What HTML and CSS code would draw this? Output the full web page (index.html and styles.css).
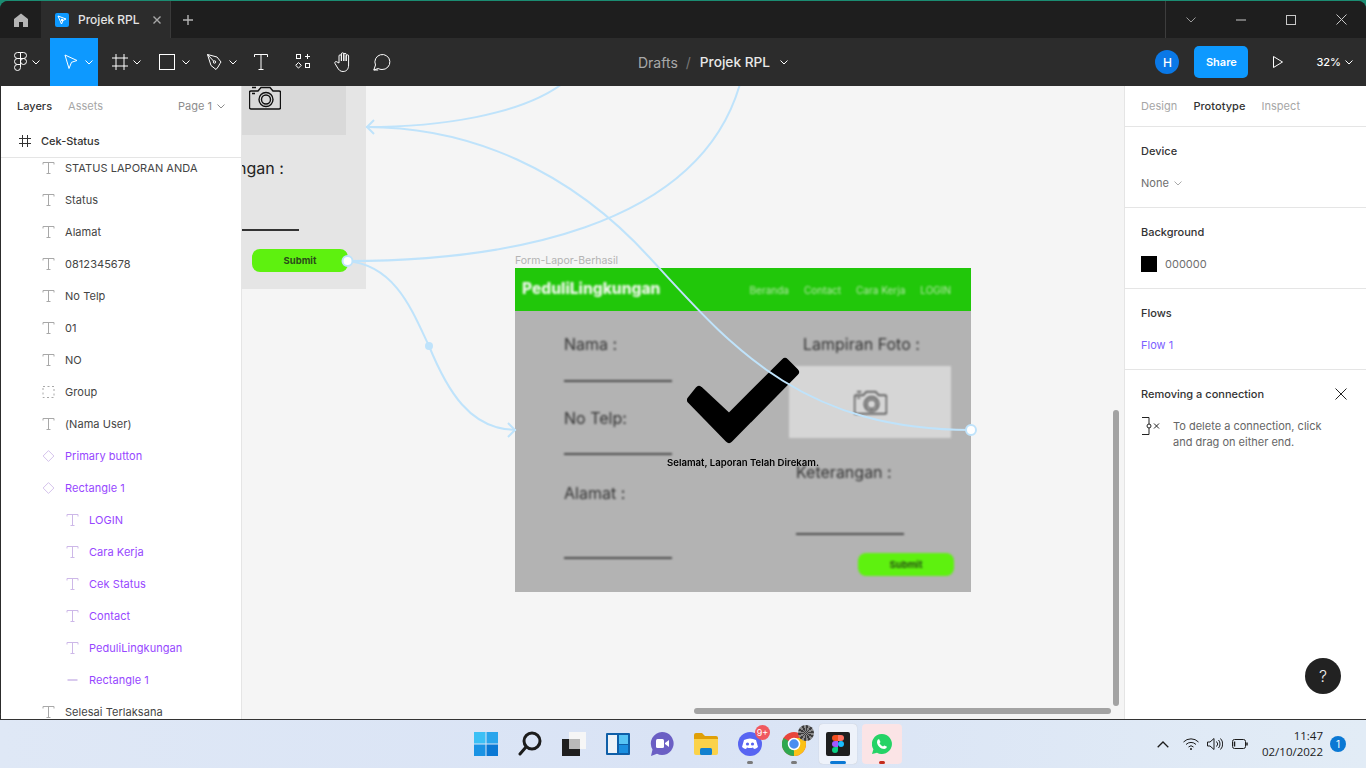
FILE: index.html
```html
<!DOCTYPE html>
<html lang="id">
<head>
    <meta charset="UTF-8">
    <meta name="viewport" content="width=device-width, initial-scale=1.0">
    <title>Projek RPL</title>
    <link rel="stylesheet" href="styles.css">
</head>
<body>
    <svg class="sprite" width="0" height="0">
        <symbol id="i-text" viewBox="0 0 12 12"><path d="M.5 2.5V.5h11v2M6 .5v11M4 11.5h4" fill="none" stroke="currentColor"/></symbol>
        <symbol id="i-diamond" viewBox="0 0 14 14"><path d="M7 .7L13.3 7 7 13.3.7 7z" fill="none" stroke="currentColor"/></symbol>
        <symbol id="i-chev" viewBox="0 0 8 5"><path d="M.5.5L4 4 7.5.5" fill="none" stroke="currentColor"/></symbol>
        <symbol id="i-camera" viewBox="0 0 32 24"><path d="M2 5h7l3-3.5h9L24 5h6q1.5 0 1.5 1.5v15q0 1.5-1.5 1.5H2q-1.5 0-1.5-1.5v-15Q.5 5 2 5z" fill="none" stroke="currentColor" stroke-width="1.4"/><circle cx="17" cy="13.5" r="7" fill="none" stroke="currentColor" stroke-width="1.4"/><circle cx="17" cy="13.5" r="4.5" fill="none" stroke="currentColor" stroke-width="1.4"/><path d="M3 1.5h4M3 7.5h3" stroke="currentColor" stroke-width="1.4"/></symbol>
    </svg>

    <div class="window">
        <!-- barra de abas -->
        <div class="titlebar">
            <div class="home-tab">
                <svg width="14" height="14" viewBox="0 0 14 14"><path d="M7 .5L14 6v8H9V9H5v5H0V6z" fill="#b4b4b4"/></svg>
            </div>
            <div class="file-tab">
                <span class="file-icon">
                    <svg width="10" height="10" viewBox="0 0 10 10"><path d="M1 1l8 3-3 1.5L4.5 9z" fill="none" stroke="#fff"/><circle cx="5" cy="5" r="1.2" fill="#fff"/></svg>
                </span>
                <span class="file-name">Projek RPL</span>
                <svg class="tab-close" width="8" height="8" viewBox="0 0 8 8"><path d="M.5.5l7 7M7.5.5l-7 7" stroke="#a8a8a8" stroke-width="1.4"/></svg>
            </div>
            <svg class="tab-add" width="10" height="10" viewBox="0 0 10 10"><path d="M5 0v10M0 5h10" stroke="#b4b4b4" stroke-width="1.4"/></svg>
            <div class="win-controls">
                <span class="win-btn"><svg width="10" height="6" viewBox="0 0 10 6"><path d="M.5.5L5 5 9.5.5" fill="none" stroke="#9a9a9a"/></svg></span>
                <span class="win-btn"><svg width="10" height="2" viewBox="0 0 10 2"><path d="M0 1h10" stroke="#c8c8c8"/></svg></span>
                <span class="win-btn"><svg width="10" height="10" viewBox="0 0 10 10"><rect x=".5" y=".5" width="9" height="9" fill="none" stroke="#c8c8c8"/></svg></span>
                <span class="win-btn"><svg width="11" height="11" viewBox="0 0 11 11"><path d="M.5.5l10 10M10.5.5l-10 10" stroke="#c8c8c8"/></svg></span>
            </div>
        </div>

        <!-- barra de ferramentas -->
        <div class="toolbar">
            <div class="tools">
                <div class="tool tool-menu">
                    <svg width="13" height="20" viewBox="0 0 13 20" fill="none" stroke="#fff"><path d="M6.5.5h-3a3 3 0 000 6h3zM6.5.5h3a3 3 0 010 6h-3zM6.5 6.5h-3a3 3 0 000 6h3z"/><circle cx="9.5" cy="9.5" r="3"/><path d="M6.5 12.5h-3a3 3 0 103 3z"/></svg>
                    <svg class="chev"><use href="#i-chev"/></svg>
                </div>
                <div class="tool tool-active">
                    <svg width="14" height="16" viewBox="0 0 14 16"><path d="M1 1l12 5.5-5.5 1.8L5 14.5z" fill="none" stroke="#fff"/></svg>
                    <svg class="chev"><use href="#i-chev"/></svg>
                </div>
                <div class="tool tool-frame">
                    <svg width="16" height="16" viewBox="0 0 16 16"><path d="M4 0v16M12 0v16M0 4h16M0 12h16" stroke="#fff"/></svg>
                    <svg class="chev"><use href="#i-chev"/></svg>
                </div>
                <div class="tool tool-rect">
                    <svg width="16" height="16" viewBox="0 0 16 16"><rect x=".5" y=".5" width="15" height="15" fill="none" stroke="#fff"/></svg>
                    <svg class="chev"><use href="#i-chev"/></svg>
                </div>
                <div class="tool tool-pen">
                    <svg width="16" height="16" viewBox="0 0 16 16" fill="none" stroke="#fff"><path d="M.5.5L10 3l4 5-1 1.5-2 3.5-2 2.5-5-4z"/><path d="M.5.5l6 6.5"/><circle cx="7.5" cy="8" r="1.2"/></svg>
                    <svg class="chev"><use href="#i-chev"/></svg>
                </div>
                <div class="tool tool-plain tool-type">
                    <svg width="14" height="16" viewBox="0 0 14 16"><path d="M.5 3V.5h13V3M7 .5v15M4.5 15.5h5" fill="none" stroke="#fff"/></svg>
                </div>
                <div class="tool tool-plain tool-nudge">
                    <svg width="16" height="16" viewBox="0 0 16 16" fill="none" stroke="#fff"><rect x="1.5" y=".5" width="4" height="4"/><path d="M12.5 0v5M10 2.5h5"/><path d="M3.5 8.5l2.8 2.8-2.800 2.800-2.800-2.800z"/><rect x="10.5" y="9.5" width="4" height="4"/></svg>
                </div>
                <div class="tool tool-plain tool-nudge">
                    <svg width="18" height="20" viewBox="0 0 18 20" fill="none" stroke="#fff"><path d="M5 11V4a1.2 1.2 0 012.4 0v5-7a1.2 1.2 0 012.4 0v7-6.5a1.2 1.2 0 012.4 0V9 4a1.2 1.2 0 012.4 0v9c0 4-2 6.5-5.5 6.5-3 0-4.3-1.5-6-4.5L1 11.5c-.8-1.5 1-2.6 2.1-1.5z"/></svg>
                </div>
                <div class="tool tool-plain">
                    <svg width="18" height="18" viewBox="0 0 18 18" fill="none" stroke="#fff"><path d="M.8 17l1.7-5A7.5 7.5 0 119 16.5c-1.4 0-2.7-.3-3.8-1z"/><path d="M.8 17h4.4"/></svg>
                </div>
            </div>
            <div class="doc-title">
                <span class="crumb">Drafts</span>
                <span class="crumb-sep">/</span>
                <span class="doc-name">Projek RPL</span>
                <svg class="chev"><use href="#i-chev"/></svg>
            </div>
            <div class="actions">
                <span class="avatar">H</span>
                <span class="share">Share</span>
                <svg class="play" width="10" height="12" viewBox="0 0 10 12"><path d="M.5.5l9 5.5-9 5.5z" fill="none" stroke="#fff"/></svg>
                <span class="zoom-level">32%</span>
                <svg class="chev"><use href="#i-chev"/></svg>
            </div>
        </div>

        <div class="workspace">
            <!-- painel de camadas -->
            <aside class="left-panel">
                <div class="panel-top">
                    <div class="panel-tabs">
                        <span class="tab-on">Layers</span>
                        <span class="tab-off">Assets</span>
                        <span class="page-select">Page 1 <svg class="chev"><use href="#i-chev"/></svg></span>
                    </div>
                    <div class="frame-row">
                        <svg width="12" height="12" viewBox="0 0 12 12"><path d="M3.5 0v12M8.5 0v12M0 3.5h12M0 8.5h12" stroke="#333"/></svg>
                        <span>Cek-Status</span>
                    </div>
                </div>
                <ul class="layers">
                    <li class="layer"><svg class="ico"><use href="#i-text"/></svg>STATUS LAPORAN ANDA</li>
                    <li class="layer"><svg class="ico"><use href="#i-text"/></svg>Status</li>
                    <li class="layer"><svg class="ico"><use href="#i-text"/></svg>Alamat</li>
                    <li class="layer"><svg class="ico"><use href="#i-text"/></svg>0812345678</li>
                    <li class="layer"><svg class="ico"><use href="#i-text"/></svg>No Telp</li>
                    <li class="layer"><svg class="ico"><use href="#i-text"/></svg>01</li>
                    <li class="layer"><svg class="ico"><use href="#i-text"/></svg>NO</li>
                    <li class="layer"><svg class="ico" viewBox="0 0 12 12"><rect x=".5" y=".5" width="11" height="11" fill="none" stroke="currentColor" stroke-dasharray="2 2.5"/></svg>Group</li>
                    <li class="layer"><svg class="ico"><use href="#i-text"/></svg>(Nama User)</li>
                    <li class="layer comp"><svg class="ico"><use href="#i-diamond"/></svg>Primary button</li>
                    <li class="layer comp"><svg class="ico"><use href="#i-diamond"/></svg>Rectangle 1</li>
                    <li class="layer comp sub"><svg class="ico"><use href="#i-text"/></svg>LOGIN</li>
                    <li class="layer comp sub"><svg class="ico"><use href="#i-text"/></svg>Cara Kerja</li>
                    <li class="layer comp sub"><svg class="ico"><use href="#i-text"/></svg>Cek Status</li>
                    <li class="layer comp sub"><svg class="ico"><use href="#i-text"/></svg>Contact</li>
                    <li class="layer comp sub"><svg class="ico"><use href="#i-text"/></svg>PeduliLingkungan</li>
                    <li class="layer comp sub"><svg class="ico" viewBox="0 0 12 12"><path d="M1 6h10" stroke="currentColor" stroke-width="1.5"/></svg>Rectangle 1</li>
                    <li class="layer"><svg class="ico"><use href="#i-text"/></svg>Selesai Terlaksana</li>
                </ul>
            </aside>

            <!-- canvas -->
            <main class="canvas">
                <div class="frame-cut">
                    <div class="cut-photo">
                        <svg class="cut-camera"><use href="#i-camera"/></svg>
                    </div>
                    <span class="cut-label">ngan :</span>
                    <span class="cut-line"></span>
                    <span class="cut-submit">Submit</span>
                </div>

                <span class="frame-label">Form-Lapor-Berhasil</span>
                <div class="mock">
                    <div class="mock-blur">
                        <div class="mock-head">
                            <span class="mock-logo">PeduliLingkungan</span>
                            <nav class="mock-nav">
                                <span>Beranda</span>
                                <span>Contact</span>
                                <span>Cara Kerja</span>
                                <span>LOGIN</span>
                            </nav>
                        </div>
                        <span class="mock-text f-nama">Nama :</span>
                        <span class="mock-rule r-nama"></span>
                        <span class="mock-text f-telp">No Telp:</span>
                        <span class="mock-rule r-telp"></span>
                        <span class="mock-text f-alamat">Alamat :</span>
                        <span class="mock-rule r-alamat"></span>
                        <span class="mock-text f-foto">Lampiran Foto :</span>
                        <div class="mock-photo"><svg class="mock-camera"><use href="#i-camera"/></svg></div>
                        <span class="mock-text f-ket">Keterangan :</span>
                        <span class="mock-rule r-ket"></span>
                        <span class="mock-submit">Submit</span>
                    </div>
                    <svg class="check" width="114" height="90" viewBox="0 0 114 90"><path d="M12 33L42 61 98 5 108 15 42 82 4 43z" fill="#000" stroke="#000" stroke-width="8" stroke-linejoin="round"/></svg>
                    <span class="done-text">Selamat, Laporan Telah Direkam.</span>
                </div>

                <!-- ligações do protótipo -->
                <svg class="wires" width="882" height="633" viewBox="242 86 882 633" fill="none" stroke="#bfe3fb" stroke-width="2">
                    <path d="M347 261C395 265 412 310 429 346C447 390 470 430 516 430"/>
                    <path d="M347 261C500 261 698 230 740 84"/>
                    <path d="M971 430C800 430 730 345 650 258C570 170 470 127 366 127"/>
                    <path d="M366 127C440 127 520 115 562 84"/>
                    <path d="M374 120l-7 7 7 7M508 423l7 7-7 7"/>
                    <circle cx="429" cy="346" r="4" fill="#bfe3fb" stroke="none"/>
                    <circle cx="347.5" cy="261" r="5" fill="#fff"/>
                    <circle cx="971" cy="430" r="5" fill="#fff"/>
                </svg>

                <span class="scroll-v"></span>
                <span class="scroll-h"></span>
            </main>

            <!-- painel direito -->
            <aside class="right-panel">
                <div class="right-tabs">
                    <span class="tab-off">Design</span>
                    <span class="tab-on">Prototype</span>
                    <span class="tab-off">Inspect</span>
                </div>
                <section class="prop prop-device">
                    <h3>Device</h3>
                    <span class="prop-value">None <svg class="chev"><use href="#i-chev"/></svg></span>
                </section>
                <section class="prop">
                    <h3>Background</h3>
                    <span class="prop-value"><span class="swatch"></span>000000</span>
                </section>
                <section class="prop">
                    <h3>Flows</h3>
                    <span class="prop-value flow">Flow 1</span>
                </section>
                <section class="hint">
                    <div class="hint-head">
                        <h3>Removing a connection</h3>
                        <svg width="12" height="12" viewBox="0 0 12 12"><path d="M.5.5l11 11M11.5.5l-11 11" stroke="#222"/></svg>
                    </div>
                    <div class="hint-body">
                        <svg width="20" height="18" viewBox="0 0 20 18" fill="none" stroke="#222"><path d="M1 .5h7v17H1"/><circle cx="8" cy="9" r="2" fill="#fff"/><path d="M13 6.5l5 5M18 6.5l-5 5"/></svg>
                        <p>To delete a connection, click and drag on either end.</p>
                    </div>
                </section>
                <span class="help">?</span>
            </aside>
        </div>
    </div>

    <!-- barra de tarefas -->
    <footer class="taskbar">
        <div class="task-icons">
            <span class="task">
                <svg width="24" height="24" viewBox="0 0 24 24"><rect width="11.5" height="11.5" fill="#3cc0f5"/><rect x="12.5" width="11.5" height="11.5" fill="#2aa5ec"/><rect y="12.5" width="11.5" height="11.5" fill="#1a93e4"/><rect x="12.5" y="12.5" width="11.5" height="11.5" fill="#0a78d4"/></svg>
            </span>
            <span class="task">
                <svg width="24" height="26" viewBox="0 0 24 26" fill="none" stroke="#1c1c1c" stroke-width="3"><circle cx="14" cy="10" r="8"/><path d="M8 16l-6 7" stroke-linecap="round"/></svg>
            </span>
            <span class="task">
                <svg width="24" height="24" viewBox="0 0 24 24"><rect x="7" y="0" width="17" height="17" fill="#f6f6f6"/><rect y="7" width="18" height="17" fill="#1f1f1f"/><rect x="7" y="7" width="11" height="10" fill="#b8b8b8"/></svg>
            </span>
            <span class="task">
                <svg width="24" height="22" viewBox="0 0 24 22"><rect width="24" height="22" rx="1" fill="#0f5fa8"/><rect x="2" y="2" width="9" height="18" fill="#eef3f8"/><rect x="13" y="2" width="9" height="9" fill="#56c4f5"/><rect x="13" y="12" width="9" height="8" fill="#1a8fe0"/></svg>
            </span>
            <span class="task">
                <svg width="24" height="26" viewBox="0 0 24 26"><path d="M12 1a11.5 11.5 0 11-5 21.8L1 25l1.5-6.5A11.5 11.5 0 0112 1z" fill="#6b5fc4"/><rect x="6" y="8" width="8" height="9" rx="1.5" fill="#fff"/><path d="M15 12l4-3v7l-4-3z" fill="#fff"/></svg>
            </span>
            <span class="task">
                <svg width="24" height="22" viewBox="0 0 24 22"><path d="M0 2q0-2 2-2h6l3 3h11q2 0 2 2v3H0z" fill="#e0a008"/><path d="M0 6h24v14q0 2-2 2H2q-2 0-2-2z" fill="#fbd249"/><rect x="6" y="15" width="12" height="7" rx="1.5" fill="#1180cf"/></svg>
            </span>
            <span class="task task-dot">
                <svg width="24" height="24" viewBox="0 0 24 24"><circle cx="12" cy="12" r="12" fill="#5865f2"/><path d="M6 8q3-1.5 6-1.5T18 8l2 7q-2 2-4 2l-1-1.5q-3 1-6 0L8 17q-2 0-4-2z" fill="#fff"/><circle cx="9.5" cy="12" r="1.6" fill="#5865f2"/><circle cx="14.5" cy="12" r="1.6" fill="#5865f2"/></svg>
                <span class="badge-red">9+</span>
            </span>
            <span class="task task-dot">
                <svg width="24" height="24" viewBox="0 0 24 24"><circle cx="12" cy="12" r="12" fill="#e8453c"/><path d="M12 12L1.6 6A12 12 0 001 17a12 12 0 0011 7z" fill="#2fa84f"/><path d="M12 12v12a12 12 0 0012-12q0-3-1.6-6H12z" fill="#fbc116"/><circle cx="12" cy="12" r="5.5" fill="#4a8df0" stroke="#fff" stroke-width="1.5"/></svg>
                <span class="chrome-avatar"></span>
            </span>
            <span class="task task-figma">
                <span class="figma-tile">
                    <svg width="12" height="18" viewBox="0 0 12 18"><path d="M6 0H3a3 3 0 000 6h3z" fill="#f24e1e"/><path d="M6 0h3a3 3 0 010 6H6z" fill="#ff7262"/><path d="M6 6H3a3 3 0 000 6h3z" fill="#a259ff"/><circle cx="9" cy="9" r="3" fill="#1abcfe"/><path d="M6 12H3a3 3 0 103 3z" fill="#0acf83"/></svg>
                </span>
            </span>
            <span class="task task-wa">
                <svg width="20" height="20" viewBox="0 0 20 20"><path d="M10 0a10 10 0 11-5 18.7L0 20l1.4-4.800A10 10 0 0110 0z" fill="#25d366"/><path d="M7 5l1.5 3-1 1.3q1.3 2.3 3.5 3.2l1.3-1.100 2.700 1.400q-.3 2-2.700 2.200C8.500 15 5 11.500 5 8q0-2.400 2-3z" fill="#fff"/></svg>
            </span>
        </div>
        <div class="tray">
            <svg width="12" height="7" viewBox="0 0 12 7"><path d="M.7 6.3L6 1l5.3 5.3" fill="none" stroke="#1c1c1c" stroke-width="1.3"/></svg>
            <svg class="tray-wifi" width="16" height="12" viewBox="0 0 16 12" fill="none" stroke="#1c1c1c"><path d="M.5 4a10.500 10.500 0 0115 0M3 6.500a7 7 0 0110 0M5.500 9a3.500 3.500 0 015 0"/><circle cx="8" cy="11" r=".6" fill="#1c1c1c"/></svg>
            <svg class="tray-vol" width="16" height="12" viewBox="0 0 16 12" fill="none" stroke="#1c1c1c"><path d="M.5 4H3l4-3.500v11L3 8H.5zM9.500 3.500a3.500 3.500 0 010 5M11.500 2a6 6 0 010 8M13.500.5a8 8 0 010 11"/></svg>
            <svg class="tray-batt" width="16" height="10" viewBox="0 0 16 10" fill="none" stroke="#1c1c1c"><rect x=".5" y=".5" width="13" height="9" rx="2"/><path d="M2.5 2.500v5" stroke-width="1.5"/><path d="M15 3.500v3" stroke-width="1.5"/></svg>
            <div class="clock"><span>11:47</span><span>02/10/2022</span></div>
            <span class="notif">1</span>
        </div>
    </footer>
</body>
</html>
```

FILE: styles.css
```css
* {
    box-sizing: border-box;
}
html, body {
    height: 768px;
    overflow: hidden;
}
body {
    margin: 0;
    font-family: Inter, "Liberation Sans", sans-serif;
    font-size: 11px;
    color: #333;
    background-color: #1b8c72;
    display: flex;
    flex-direction: column;
    padding-top: 1px;
}
svg {
    display: block;
    flex-shrink: 0;
}
.sprite {
    position: absolute;
}
h3 {
    margin: 0;
    font-size: 11px;
    font-weight: 500;
    color: #333;
}
.chev {
    width: 8px;
    height: 5px;
    color: currentColor;
}

/* janela */
.window {
    height: 718px;
    display: flex;
    flex-direction: column;
    background-color: #2c2c2c;
    border-radius: 8px 8px 0 0;
    overflow: hidden;
}
.titlebar {
    height: 37px;
    background-color: #1e1e1e;
    display: flex;
    align-items: center;
}
.home-tab {
    width: 41px;
    height: 100%;
    display: flex;
    align-items: center;
    justify-content: center;
}
.file-tab {
    width: 130px;
    height: 100%;
    background-color: #2c2c2c;
    display: flex;
    align-items: center;
    padding-left: 14px;
    border-right: 1px solid #3a3a3a;
}
.file-icon {
    width: 14px;
    height: 14px;
    border-radius: 2px;
    background-color: #0d99ff;
    display: flex;
    align-items: center;
    justify-content: center;
}
.file-name {
    margin-left: 9px;
    font-size: 12px;
    font-weight: 500;
    color: #e4e4e4;
}
.tab-close {
    margin-left: 13px;
}
.tab-add {
    margin-left: 12px;
}
.win-controls {
    margin-left: auto;
    width: 201px;
    height: 100%;
    border-left: 1px solid #3d3d3d;
    display: flex;
}
.win-btn {
    width: 50px;
    display: flex;
    align-items: center;
    justify-content: center;
}

.toolbar {
    height: 48px;
    background-color: #2c2c2c;
    display: flex;
    align-items: center;
    color: #fff;
    position: relative;
}
.tools {
    display: flex;
    height: 100%;
}
.tool {
    width: 48px;
    display: flex;
    align-items: center;
    justify-content: center;
    gap: 6px;
}
.tool-menu {
    width: 50px;
    padding-left: 4px;
    gap: 5px;
}
.tool-active {
    background-color: #0d99ff;
    padding-left: 8px;
    gap: 7px;
}
.tool-frame {
    padding-left: 9px;
    gap: 5px;
}
.tool-rect {
    padding-left: 9px;
    gap: 7px;
}
.tool-pen {
    padding-left: 8px;
    gap: 6px;
}
.tool-plain {
    width: 40px;
}
.tool-type {
    padding-right: 2px;
}
.tool-nudge {
    padding-left: 2px;
}
.doc-title {
    position: absolute;
    left: 638px;
    top: 0;
    height: 100%;
    display: flex;
    align-items: center;
    font-size: 14px;
}
.crumb {
    color: #a8a8a8;
}
.crumb-sep {
    color: #777;
    margin: 0 9px 0 8px;
}
.doc-name {
    font-size: 13.7px;
    font-weight: 500;
    color: #e8e8e8;
    margin-right: 10px;
}
.actions {
    margin-left: auto;
    display: flex;
    align-items: center;
    padding-right: 13px;
}
.avatar {
    width: 24px;
    height: 24px;
    border-radius: 50%;
    background-color: #0a78e6;
    display: flex;
    align-items: center;
    justify-content: center;
    font-size: 12px;
    font-weight: 500;
}
.share {
    width: 54px;
    height: 32px;
    margin-left: 15px;
    border-radius: 5px;
    background-color: #0d99ff;
    display: flex;
    align-items: center;
    justify-content: center;
    font-weight: 600;
}
.play {
    margin-left: 25px;
}
.zoom-level {
    margin-left: 33px;
    font-weight: 500;
    margin-right: 4px;
}

/* área de trabalho */
.workspace {
    flex: 1;
    min-height: 0;
    display: flex;
    background-color: #fff;
    border-left: 1px solid #2c2c2c;
    border-radius: 0 0 0 6px;
}
.left-panel {
    width: 241px;
    background-color: #fff;
    border-right: 1px solid #e5e5e5;
    overflow: hidden;
}
.panel-top {
    position: relative;
    background-color: #fff;
    border-bottom: 1px solid #e5e5e5;
    height: 72px;
}
.panel-tabs {
    height: 40px;
    padding: 0 16px;
    display: flex;
    align-items: center;
    gap: 16px;
}
.tab-on {
    font-weight: 500;
    color: #333;
}
.tab-off {
    color: #a6a6a6;
}
.page-select {
    margin-left: auto;
    padding-left: 1px;
    color: #8c8c8c;
    display: flex;
    align-items: center;
    gap: 5px;
}
.frame-row {
    height: 30px;
    padding-left: 18px;
    display: flex;
    align-items: center;
    gap: 10px;
    font-weight: 500;
}
.layers {
    list-style: none;
    margin: -6px 0 0;
    padding: 0;
}
.layer {
    height: 32px;
    padding-left: 41px;
    display: flex;
    align-items: center;
    gap: 10px;
    color: #444;
    letter-spacing: .05px;
}
.layer .ico {
    width: 13px;
    height: 12px;
    color: #a8a8a8;
}
.comp {
    color: #9747ff;
}
.comp .ico {
    color: #cdb8e8;
}
.sub {
    padding-left: 65px;
}

/* canvas */
.canvas {
    flex: 1;
    position: relative;
    background-color: #f5f5f5;
    overflow: hidden;
}
.frame-cut {
    position: absolute;
    left: 0;
    top: 0;
    width: 124px;
    height: 203px;
    background-color: #e5e5e5;
    overflow: hidden;
}
.cut-photo {
    width: 104px;
    height: 49px;
    background-color: #d9d9d9;
    overflow: hidden;
}
.cut-camera {
    width: 32px;
    height: 24px;
    margin: 0 0 0 7px;
    color: #111;
}
.cut-label {
    position: absolute;
    left: -5px;
    top: 72px;
    font-size: 16px;
    color: #222;
}
.cut-line {
    position: absolute;
    left: 0;
    top: 143px;
    width: 57px;
    height: 2px;
    background-color: #333;
}
.cut-submit {
    position: absolute;
    left: 10px;
    top: 163px;
    width: 96px;
    height: 23px;
    border-radius: 8px;
    background-color: #5ef10f;
    display: flex;
    align-items: center;
    justify-content: center;
    font-size: 9.5px;
    font-weight: 700;
    color: #2a4d1a;
}
.frame-label {
    position: absolute;
    left: 273px;
    top: 168px;
    font-size: 10.5px;
    color: #b3b3b3;
}
.mock {
    position: absolute;
    left: 273px;
    top: 182px;
    width: 456px;
    height: 324px;
    overflow: hidden;
    background: linear-gradient(#21c70a 0 43px, #b3b3b3 43px);
}
.mock-blur {
    position: relative;
    height: 100%;
    filter: blur(.8px);
}
.mock-head {
    height: 43px;
    display: flex;
    align-items: center;
    justify-content: space-between;
    padding: 0 20px 0 7px;
}
.mock-logo {
    font-size: 15.5px;
    font-weight: 800;
    color: #f0f7ec;
    margin-top: -3px;
}
.mock-nav {
    display: flex;
    gap: 15px;
    font-size: 10px;
    color: #b7e6ab;
}
.mock-text {
    position: absolute;
    font-size: 16px;
    color: #333;
    line-height: 20px;
}
.mock-rule {
    position: absolute;
    left: 49px;
    width: 108px;
    height: 2px;
    background-color: #4d4d4d;
}
.f-nama { left: 49px; top: 66px; }
.r-nama { top: 112px; }
.f-telp { left: 49px; top: 140px; }
.r-telp { top: 185px; }
.f-alamat { left: 49px; top: 215px; }
.r-alamat { top: 289px; }
.f-foto { left: 288px; top: 66px; }
.f-ket { left: 281px; top: 194px; }
.r-ket { left: 281px; top: 265px; }
.mock-photo {
    position: absolute;
    left: 274px;
    top: 98px;
    width: 162px;
    height: 72px;
    background-color: #d6d6d6;
    display: flex;
    align-items: center;
    justify-content: center;
}
.mock-camera {
    width: 33px;
    height: 25px;
    color: #444;
}
.mock-submit {
    position: absolute;
    left: 343px;
    top: 285px;
    width: 96px;
    height: 23px;
    border-radius: 8px;
    background-color: #5ef10f;
    display: flex;
    align-items: center;
    justify-content: center;
    font-size: 9.5px;
    font-weight: 700;
    color: #2a5a14;
}
.check {
    position: absolute;
    left: 172px;
    top: 89px;
}
.done-text {
    position: absolute;
    left: 152px;
    top: 189px;
    font-size: 9.6px;
    font-weight: 600;
    color: #000;
    white-space: nowrap;
}
.wires {
    position: absolute;
    left: 0;
    top: 0;
}
.scroll-v {
    position: absolute;
    left: 871px;
    top: 324px;
    width: 6px;
    height: 296px;
    border-radius: 3px;
    background-color: #a3a3a3;
}
.scroll-h {
    position: absolute;
    left: 452px;
    top: 622px;
    width: 417px;
    height: 6px;
    border-radius: 3px;
    background-color: #a3a3a3;
}

/* painel direito */
.right-panel {
    width: 242px;
    position: relative;
    background-color: #fff;
    border-left: 1px solid #e5e5e5;
}
.right-tabs {
    height: 41px;
    padding: 0 16px 1px;
    display: flex;
    align-items: center;
    gap: 16px;
    letter-spacing: .05px;
    border-bottom: 1px solid #e5e5e5;
}
.prop {
    height: 81px;
    padding: 17px 16px 0;
    border-bottom: 1px solid #e5e5e5;
}
.prop-value {
    margin-top: 18px;
    display: flex;
    align-items: center;
    height: 14px;
    gap: 5px;
    color: #6e6e6e;
}
.prop-device .chev {
    color: #aaa;
}
.swatch {
    width: 16px;
    height: 16px;
    background-color: #000;
    margin-right: 3px;
}
.flow {
    color: #7b61ff;
}
.hint {
    padding: 17px 16px;
}
.hint-head {
    display: flex;
    justify-content: space-between;
    align-items: center;
    padding-right: 3px;
}
.hint-body {
    margin-top: 17px;
    display: flex;
    gap: 12px;
}
.hint-body svg {
    margin-top: -1px;
}
.hint-body p {
    margin: 0;
    line-height: 16px;
    color: #666;
    width: 160px;
}
.help {
    position: absolute;
    left: 180px;
    top: 572px;
    width: 36px;
    height: 36px;
    border-radius: 50%;
    background-color: #222;
    color: #eee;
    font-size: 16px;
    font-weight: 300;
    display: flex;
    align-items: center;
    justify-content: center;
}

/* barra de tarefas */
.taskbar {
    height: 49px;
    border-top: 1px solid #333;
    background: linear-gradient(90deg, #dfe8f6, #d9e3f5 50%, #e2ecf6);
    position: relative;
    display: flex;
    justify-content: center;
    align-items: center;
}
.task-icons {
    display: flex;
    padding-left: 2px;
}
.task {
    position: relative;
    width: 44px;
    height: 40px;
    display: flex;
    align-items: center;
    justify-content: center;
    border-radius: 4px;
}
.task-dot::after {
    content: "";
    position: absolute;
    left: 19px;
    bottom: 0;
    width: 6px;
    height: 3px;
    border-radius: 2px;
    background-color: #7a7a7a;
}
.badge-red {
    position: absolute;
    right: 2px;
    top: 1px;
    width: 15px;
    height: 15px;
    border-radius: 50%;
    background-color: #f0595f;
    color: #fff;
    font-size: 9px;
    line-height: 15px;
    text-align: center;
}
.chrome-avatar {
    position: absolute;
    right: 2px;
    top: 1px;
    width: 16px;
    height: 16px;
    border-radius: 50%;
    background: repeating-conic-gradient(#3c3c3c 0 18deg, #8a8a8a 18deg 36deg);
}
.task-figma {
    width: 38px;
    margin: 0 3px;
    background-color: #eef2fa;
    box-shadow: 0 0 1px #bbb;
}
.task-figma::after {
    content: "";
    position: absolute;
    left: 11px;
    bottom: 0;
    width: 16px;
    height: 3px;
    border-radius: 2px;
    background-color: #0a78d4;
}
.figma-tile {
    width: 24px;
    height: 24px;
    border-radius: 2px;
    background-color: #1e1e1e;
    display: flex;
    align-items: center;
    justify-content: center;
}
.task-wa {
    width: 40px;
    margin: 0 2px;
    background-color: #fbe4e6;
}
.task-wa::after {
    content: "";
    position: absolute;
    left: 17px;
    bottom: 0;
    width: 6px;
    height: 3px;
    border-radius: 2px;
    background-color: #c42b1c;
}
.tray {
    position: absolute;
    right: 20px;
    top: 0;
    height: 100%;
    display: flex;
    align-items: center;
}
.tray-wifi {
    margin-left: 14px;
}
.tray-vol {
    margin-left: 8px;
}
.tray-batt {
    margin-left: 9px;
}
.clock {
    width: 62px;
    margin-left: 13px;
    display: flex;
    flex-direction: column;
    align-items: flex-end;
    font-family: "Open Sans", "Liberation Sans", sans-serif;
    font-size: 11.5px;
    line-height: 16px;
    color: #1c1c1c;
}
.notif {
    width: 16px;
    height: 16px;
    margin-left: 7px;
    border-radius: 50%;
    background-color: #0a78d4;
    color: #fff;
    font-size: 10px;
    text-align: center;
    line-height: 16px;
}
```
